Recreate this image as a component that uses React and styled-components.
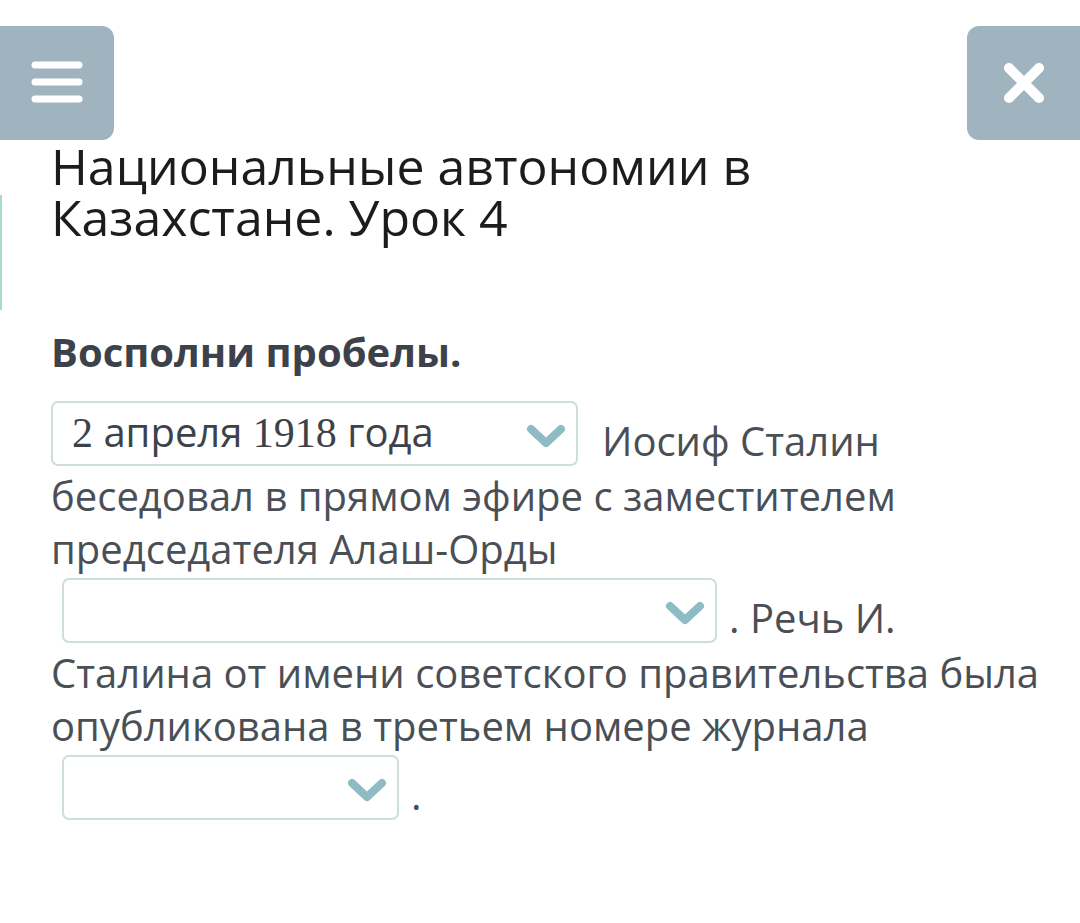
import styled, { createGlobalStyle } from "styled-components";

const GlobalStyle = createGlobalStyle`
  html, body {
    margin: 0;
    padding: 0;
    background: #fff;
  }
  body {
    font-family: "Open Sans", "Noto Sans", sans-serif;
  }
`;

const Page = styled.div`
  position: relative;
  width: 1080px;
  min-height: 923px;
  background: #fff;
  overflow: hidden;
`;

// thin green strip peeking in from the left edge
const SideMark = styled.div`
  position: absolute;
  left: 0;
  top: 195px;
  width: 2px;
  height: 115px;
  background: #a6dcc6;
`;

const TopBar = styled.div`
  display: flex;
  justify-content: space-between;
  align-items: flex-start;
  padding-top: 26px;
`;

const IconButton = styled.button`
  width: ${(p) => p.$width}px;
  height: 114px;
  border: none;
  padding: 0;
  background: #a0b4c0;
  display: flex;
  align-items: center;
  justify-content: center;
  border-radius: ${(p) => (p.$side === "left" ? "0 12px 12px 0" : "12px 0 0 12px")};
  cursor: pointer;
`;

const Content = styled.div`
  padding: 0 37px 0 51px;
`;

const Title = styled.h1`
  margin: 1px 0 0;
  font-size: 50px;
  line-height: 51px;
  font-weight: 400;
  color: #1c1c1c;
`;

const Task = styled.h2`
  margin: 86px 0 0;
  font-size: 40px;
  line-height: 46px;
  font-weight: 700;
  color: #3d424a;
`;

const Paragraph = styled.p`
  margin: 23px 0 0;
  font-size: 40px;
  line-height: 53px;
  color: #4a4f56;
`;

const Select = styled.span`
  display: inline-block;
  box-sizing: border-box;
  width: ${(p) => p.$width}px;
  height: 65px;
  margin: 3px ${(p) => p.$after || 12}px 3px ${(p) => p.$indent || 0}px;
  vertical-align: -13px;
  border: 2px solid #cfdddd;
  border-radius: 7px;
  background: #fff;
  overflow: hidden;
`;

const SelectInner = styled.span`
  display: flex;
  align-items: center;
  height: 100%;
  padding: 0 10px 0 19px;
`;

const SelectValue = styled.span`
  flex: 1;
  font-size: 40px;
  line-height: 46px;
  color: #3d424a;
  white-space: nowrap;
  margin-top: -2px;
`;

const Num = styled.span`
  font-family: "Liberation Serif", "DejaVu Serif", serif;
  font-size: 42px;
  line-height: 46px;
`;

const Chevron = styled.svg`
  flex: none;
  width: 40px;
  height: 28px;
  margin-top: 4px;
`;

function ChevronIcon() {
  return (
    <Chevron viewBox="0 0 40 28">
      <path
        d="M5 7 L20 21 L35 7"
        fill="none"
        stroke="#8fbcc4"
        strokeWidth="8"
        strokeLinecap="round"
        strokeLinejoin="round"
      />
    </Chevron>
  );
}

function Dropdown({ width, indent, after, children }) {
  return (
    <Select $width={width} $indent={indent} $after={after}>
      <SelectInner>
        <SelectValue>{children}</SelectValue>
        <ChevronIcon />
      </SelectInner>
    </Select>
  );
}

export default function App() {
  return (
    <Page>
      <GlobalStyle />
      <SideMark />
      <TopBar>
        <IconButton $width={114} $side="left" aria-label="Меню">
          <svg width="52" height="44" viewBox="0 0 52 44">
            <g stroke="#fff" strokeWidth="7" strokeLinecap="round">
              <line x1="4" y1="4" x2="48" y2="4" />
              <line x1="4" y1="21" x2="48" y2="21" />
              <line x1="4" y1="38" x2="48" y2="38" />
            </g>
          </svg>
        </IconButton>
        <IconButton $width={113} $side="right" aria-label="Закрыть">
          <svg width="44" height="44" viewBox="0 0 44 44">
            <g stroke="#fff" strokeWidth="10" strokeLinecap="round">
              <line x1="7" y1="7" x2="37" y2="37" />
              <line x1="37" y1="7" x2="7" y2="37" />
            </g>
          </svg>
        </IconButton>
      </TopBar>
      <Content>
        <Title>Национальные автономии в Казахстане. Урок 4</Title>
        <Task>Восполни пробелы.</Task>
        <Paragraph>
          <Dropdown width={527} after={24}>
            <Num>2</Num> апреля <Num>1918</Num> года
          </Dropdown>
          Иосиф Сталин беседовал в прямом эфире с заместителем председателя Алаш-Орды{" "}
          <Dropdown width={655} indent={11} />
          . Речь И. Сталина от имени советского правительства была опубликована в третьем номере журнала{" "}
          <Dropdown width={337} indent={11} />
          .
        </Paragraph>
      </Content>
    </Page>
  );
}
